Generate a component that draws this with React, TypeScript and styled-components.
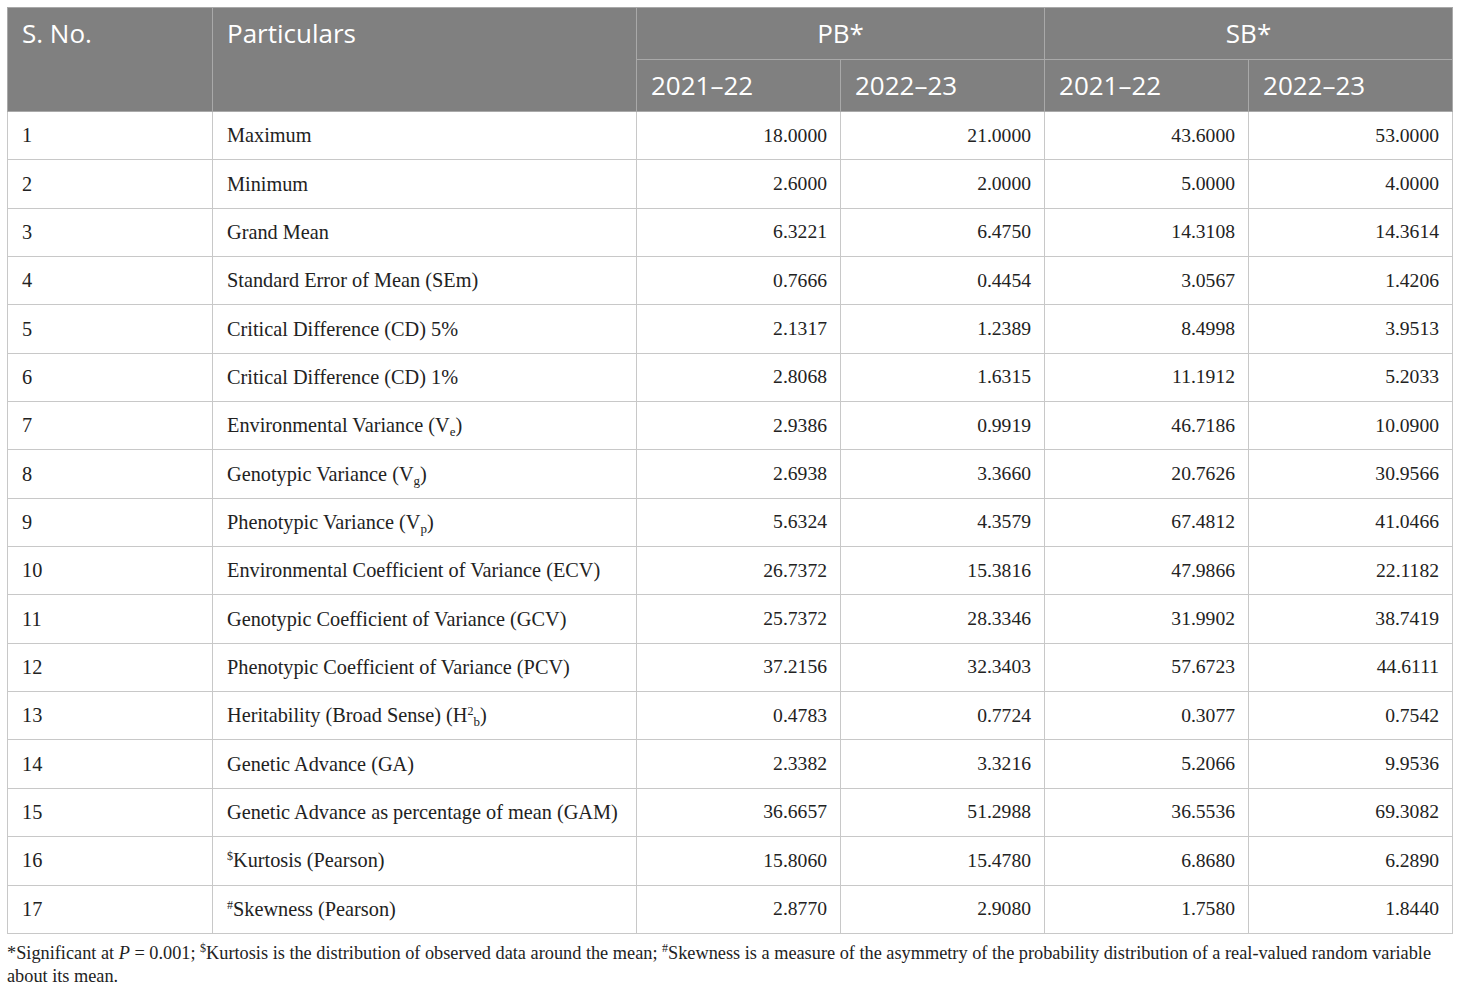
import React from "react";
import styled, { createGlobalStyle } from "styled-components";

const Global = createGlobalStyle`
  html, body { margin: 0; padding: 0; background: #ffffff; }
  body { font-family: "Liberation Serif", serif; }
`;

const Page = styled.div`
  padding: 7px 8px 0 7px;
  width: 1445px;
`;

const Table = styled.table`
  width: 1445px;
  border-collapse: collapse;
  table-layout: fixed;
`;

const HeadCell = styled.th<{ $align?: string; $top?: boolean }>`
  background: #808080;
  color: #ffffff;
  font-family: "Open Sans", "Noto Sans", sans-serif;
  font-weight: 400;
  font-size: 26px;
  height: 51px;
  padding: 0 14px;
  text-align: ${(p) => p.$align || "left"};
  vertical-align: ${(p) => (p.$top ? "top" : "middle")};
  border: 1px solid #a9a9a9;
  box-sizing: border-box;
  line-height: 51px;
`;

const Cell = styled.td<{ $num?: boolean }>`
  font-family: "Liberation Serif", serif;
  font-size: ${(p) => (p.$num ? "19.6px" : "20.3px")};
  color: #222;
  height: 48.35px;
  padding: 0 ${(p) => (p.$num ? "13px" : "14px")} 0 ${(p) => (p.$num ? "10px" : "14px")};
  text-align: ${(p) => (p.$num ? "right" : "left")};
  border: 1px solid #c8c8c8;
  box-sizing: border-box;
  white-space: nowrap;
`;

const Sub = styled.sub`
  font-size: 13px;
  vertical-align: -4px;
  line-height: 0;
`;

const Sup = styled.sup`
  font-size: 12px;
  vertical-align: 7px;
  line-height: 0;
`;

const Note = styled.p`
  margin: 8px 0 0 0;
  font-family: "Liberation Serif", serif;
  font-size: 18.3px;
  line-height: 23px;
  color: #222;
  width: 1448px;
`;

const rows: [React.ReactNode, string, string, string, string][] = [
  ["Maximum", "18.0000", "21.0000", "43.6000", "53.0000"],
  ["Minimum", "2.6000", "2.0000", "5.0000", "4.0000"],
  ["Grand Mean", "6.3221", "6.4750", "14.3108", "14.3614"],
  ["Standard Error of Mean (SEm)", "0.7666", "0.4454", "3.0567", "1.4206"],
  ["Critical Difference (CD) 5%", "2.1317", "1.2389", "8.4998", "3.9513"],
  ["Critical Difference (CD) 1%", "2.8068", "1.6315", "11.1912", "5.2033"],
  [<>Environmental Variance (V<Sub>e</Sub>)</>, "2.9386", "0.9919", "46.7186", "10.0900"],
  [<>Genotypic Variance (V<Sub>g</Sub>)</>, "2.6938", "3.3660", "20.7626", "30.9566"],
  [<>Phenotypic Variance (V<Sub>p</Sub>)</>, "5.6324", "4.3579", "67.4812", "41.0466"],
  ["Environmental Coefficient of Variance (ECV)", "26.7372", "15.3816", "47.9866", "22.1182"],
  ["Genotypic Coefficient of Variance (GCV)", "25.7372", "28.3346", "31.9902", "38.7419"],
  ["Phenotypic Coefficient of Variance (PCV)", "37.2156", "32.3403", "57.6723", "44.6111"],
  [<>Heritability (Broad Sense) (H<Sup>2</Sup><Sub>b</Sub>)</>, "0.4783", "0.7724", "0.3077", "0.7542"],
  ["Genetic Advance (GA)", "2.3382", "3.3216", "5.2066", "9.9536"],
  ["Genetic Advance as percentage of mean (GAM)", "36.6657", "51.2988", "36.5536", "69.3082"],
  [<><Sup>$</Sup>Kurtosis (Pearson)</>, "15.8060", "15.4780", "6.8680", "6.2890"],
  [<><Sup>#</Sup>Skewness (Pearson)</>, "2.8770", "2.9080", "1.7580", "1.8440"],
];

export default function App() {
  return (
    <Page>
      <Global />
      <Table>
        <colgroup>
          <col style={{ width: 205 }} />
          <col style={{ width: 424 }} />
          <col style={{ width: 204 }} />
          <col style={{ width: 204 }} />
          <col style={{ width: 204 }} />
          <col style={{ width: 204 }} />
        </colgroup>
        <thead>
          <tr>
            <HeadCell rowSpan={2} $top>S. No.</HeadCell>
            <HeadCell rowSpan={2} $top>Particulars</HeadCell>
            <HeadCell colSpan={2} $align="center">PB*</HeadCell>
            <HeadCell colSpan={2} $align="center">SB*</HeadCell>
          </tr>
          <tr>
            <HeadCell>2021–22</HeadCell>
            <HeadCell>2022–23</HeadCell>
            <HeadCell>2021–22</HeadCell>
            <HeadCell>2022–23</HeadCell>
          </tr>
        </thead>
        <tbody>
          {rows.map((r, i) => (
            <tr key={i}>
              <Cell>{i + 1}</Cell>
              <Cell>{r[0]}</Cell>
              <Cell $num>{r[1]}</Cell>
              <Cell $num>{r[2]}</Cell>
              <Cell $num>{r[3]}</Cell>
              <Cell $num>{r[4]}</Cell>
            </tr>
          ))}
        </tbody>
      </Table>
      <Note>
        *Significant at <i>P</i> = 0.001; <Sup>$</Sup>Kurtosis is the distribution of observed data around the mean; <Sup>#</Sup>Skewness is a measure of the asymmetry of the probability distribution of a real-valued random variable about its mean.
      </Note>
    </Page>
  );
}
